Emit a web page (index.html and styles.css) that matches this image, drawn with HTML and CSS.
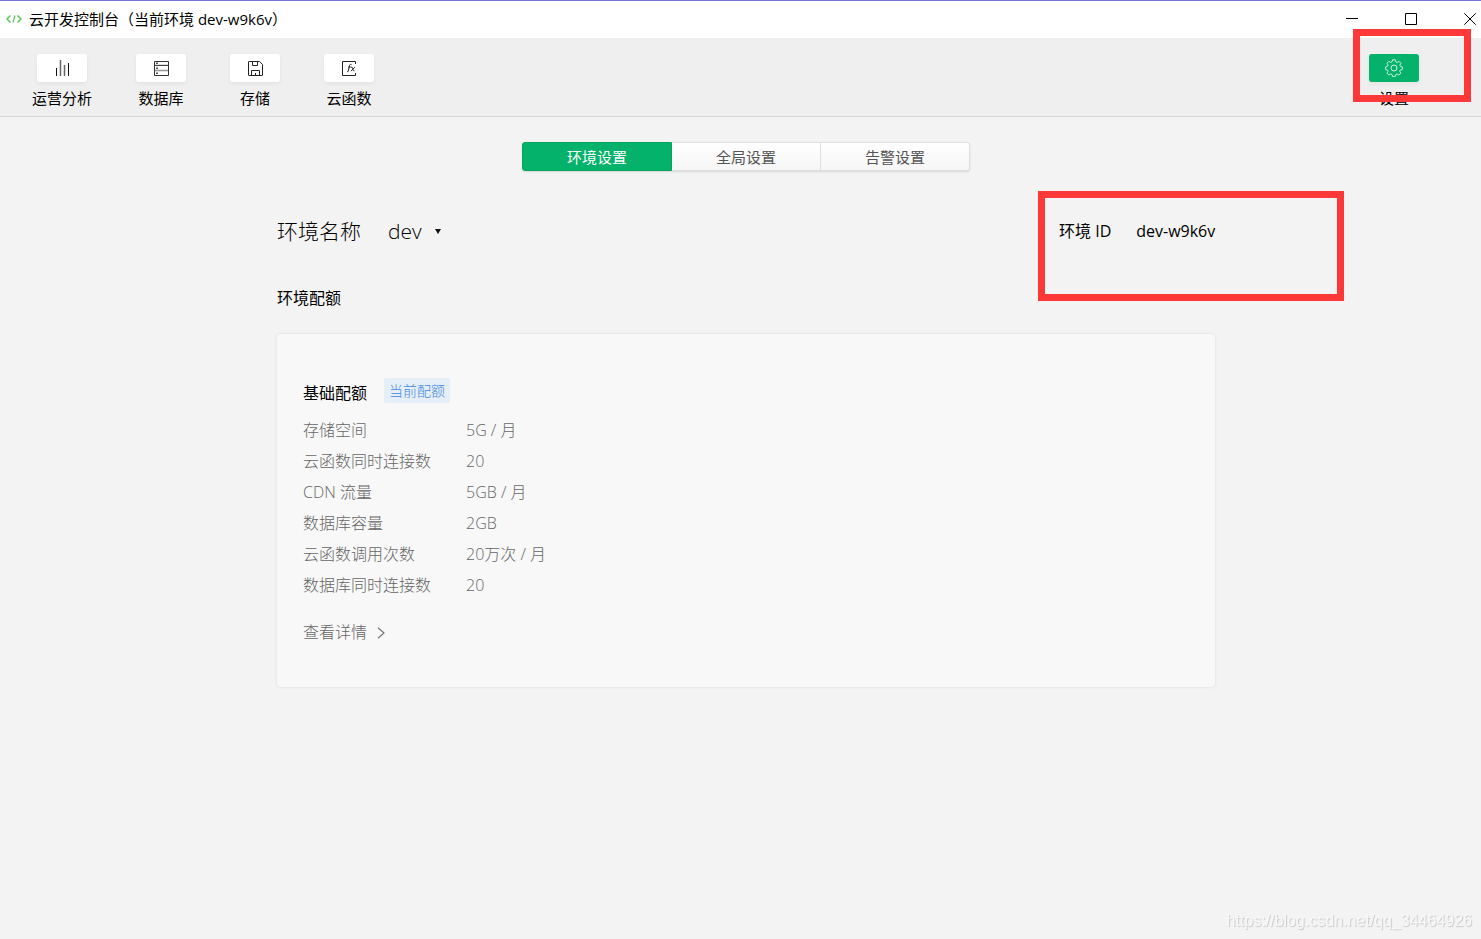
FILE: index.html
```html
<!DOCTYPE html>
<html lang="zh-CN">
<head>
<meta charset="utf-8">
<meta name="viewport" content="width=device-width, initial-scale=1">
<title>云开发控制台</title>
<link rel="stylesheet" href="styles.css">
</head>
<body>
<header class="titlebar">
  <svg class="logo" viewBox="0 0 16 12" fill="none" stroke="#5cc657" stroke-width="1.5"><path d="M4.500 2.500 1 6l3.500 3.500M11.500 2.500 15 6l-3.500 3.500"/><path d="M9 2.500 7 9.500" stroke-width="1.200"/></svg>
  <h1 class="window-title">云开发控制台（当前环境 dev-w9k6v）</h1>
  <div class="window-controls">
    <button class="window-btn" aria-label="最小化"><svg viewBox="0 0 12 12"><path d="M0 5.500h12"/></svg></button>
    <button class="window-btn" aria-label="最大化"><svg viewBox="0 0 12 12"><path d="M.5.5h11v11H.5z"/></svg></button>
    <button class="window-btn" aria-label="关闭"><svg viewBox="0 0 12 12"><path d="m.3.3 11.400 11.400M11.700.3.3 11.700"/></svg></button>
  </div>
</header>

<nav class="toolbar">
  <button class="tool">
    <span class="tool-icon"><svg viewBox="0 0 16 16" fill="none"><path d="M2.500 8v8M14.500 3v13" stroke="#111"/><path d="M6.500 0v16M10.500 5v11" stroke="#666" stroke-width="1.500"/></svg></span>
    <span class="tool-label">运营分析</span>
  </button>
  <button class="tool">
    <span class="tool-icon"><svg viewBox="0 0 16 16" fill="none"><path d="M1.500 1.500h14v14h-14zM1.500 5.500h14" stroke="#333"/><path d="M2 4.700h13" stroke="#bbb" stroke-width=".6"/><path d="M2 10.500h13" stroke="#999" stroke-width="1.600"/><path d="M3 3.300h2M3 8.200h2M3 13.200h2" stroke="#555" stroke-width="1.400"/></svg></span>
    <span class="tool-label">数据库</span>
  </button>
  <button class="tool">
    <span class="tool-icon"><svg viewBox="0 0 16 16" fill="none" stroke="#222"><path d="M1.500 2q0-.5.500-.5h10.500l3 3V15q0 .5-.500.500H2q-.5 0-.500-.500zM5.500 1.500v4h5v-4M4.500 15.500v-5h8v5M8.500 13v2.500"/></svg></span>
    <span class="tool-label">存储</span>
  </button>
  <button class="tool">
    <span class="tool-icon"><svg viewBox="0 0 16 16" fill="none" stroke="#222"><path d="M14.500 4V1.500h-13v14h13V13"/><path d="M10.500 4.500c-1-.500-1.800 0-2 1l-1.200 5.500q-.3 1-1.200.8M7.100 7h2.700M10 7.200c1.500-.3 1.600.5 1.900 2s.5 1.800 1.600 1.600M13.800 7.200l-3.900 4" /></svg></span>
    <span class="tool-label">云函数</span>
  </button>
  <button class="tool tool-settings">
    <span class="tool-icon tool-icon-active"><svg class="gear" viewBox="0 0 18 18" fill="none" stroke="#d2f5e5" stroke-linejoin="round"><path d="M7.500 1h3l.6 2.300 1.400.6 2-1.200 2 2-1.200 2 .6 1.400 2.100.5v2.800l-2.200.6-.6 1.400 1.200 2-2 2-2-1.200-1.400.6-.5 2.200h-3l-.6-2.200-1.400-.6-2 1.200-2-2 1.200-2-.6-1.400L0 11.400V8.600L2.100 8l.6-1.400-1.200-2 2-2 2 1.200 1.400-.6z" transform="translate(.6 -.1) scale(.93)"/><circle cx="9" cy="9" r="3"/></svg></span>
    <span class="tool-label">设置</span>
    <span class="marker marker-settings"></span>
  </button>
</nav>

<main class="page">
  <div class="tabs" role="tablist">
    <button class="tab tab-active" role="tab" aria-selected="true">环境设置</button>
    <button class="tab" role="tab" aria-selected="false">全局设置</button>
    <button class="tab" role="tab" aria-selected="false">告警设置</button>
  </div>

  <div class="content">
    <section class="env">
      <h2 class="env-name">环境名称</h2>
      <button class="env-picker" aria-label="环境 dev">dev<span class="caret"></span></button>
      <div class="env-id">
        <span>环境 ID</span>
        <span>dev-w9k6v</span>
        <span class="marker marker-id"></span>
      </div>
    </section>

    <h3 class="section-title">环境配额</h3>
    <section class="card">
      <div class="card-head">
        <h4 class="card-title">基础配额</h4>
        <span class="tag">当前配额</span>
      </div>
      <dl class="quota">
        <dt>存储空间</dt><dd>5G / 月</dd>
        <dt>云函数同时连接数</dt><dd>20</dd>
        <dt>CDN 流量</dt><dd>5GB / 月</dd>
        <dt>数据库容量</dt><dd>2GB</dd>
        <dt>云函数调用次数</dt><dd>20万次 / 月</dd>
        <dt>数据库同时连接数</dt><dd>20</dd>
      </dl>
      <a class="details" href="#">查看详情<svg class="chevron" viewBox="0 0 8 12" fill="none" stroke="#777" stroke-width="1.200"><path d="m1 .7 6 5.300-6 5.300"/></svg></a>
    </section>
  </div>
</main>
<div class="watermark">https://blog.csdn.net/qq_34464926</div>
</body>
</html>
```

FILE: styles.css
```css
* {
  box-sizing: border-box;
}

body {
  margin: 0;
  min-height: 100vh;
  background: #f3f3f3;
  color: #000;
  font-family: "Open Sans", "Noto Sans CJK SC", sans-serif;
  font-size: 16px;
  font-weight: 300;
}

button {
  margin: 0;
  padding: 0;
  border: 0;
  background: none;
  color: inherit;
  font: inherit;
}

h1, h2, h3, h4, dl, dd {
  margin: 0;
  font-weight: inherit;
}

svg {
  display: block;
}

/* Title bar */
.titlebar {
  display: flex;
  align-items: center;
  height: 38px;
  padding: 0 5px 2px 6px;
  border-top: 1px solid #7974d6;
  background: #fff;
}

.logo {
  width: 16px;
  height: 12px;
  margin-right: 7px;
}

.window-title {
  font-size: 15px;
  font-weight: 400;
  line-height: 22px;
}

.window-controls {
  display: flex;
  gap: 47px;
  margin-left: auto;
}

.window-btn svg {
  width: 12px;
  height: 12px;
  fill: none;
  stroke: #000;
}

/* Toolbar */
.toolbar {
  display: flex;
  gap: 44px;
  height: 79px;
  padding: 16px 62px 0 32px;
  border-bottom: 1px solid #d6d6d6;
  background: #efefef;
}

.tool {
  position: relative;
  display: flex;
  flex-direction: column;
  align-items: center;
  min-width: 50px;
  gap: 5px;
  height: 56px;
}

.tool-settings {
  margin-left: auto;
}

.tool-icon {
  display: flex;
  align-items: center;
  justify-content: center;
  width: 50px;
  height: 28px;
  border-radius: 3px;
  background: #fff;
  box-shadow: 0 2px 4px rgba(0, 0, 0, 0.05);
}

.tool-icon svg {
  width: 16px;
  height: 16px;
}

.tool-icon .gear {
  width: 18px;
  height: 18px;
}

.tool-icon-active {
  background: #05b26b;
}

.tool-label {
  font-size: 15px;
  font-weight: 400;
  line-height: 22px;
  white-space: nowrap;
}

/* Red highlight frames */
.marker {
  position: absolute;
  border: 7px solid #fc3938;
  pointer-events: none;
}

.marker-settings {
  top: -25px;
  left: -16px;
  width: 118px;
  height: 73px;
}

.marker-id {
  top: -28px;
  left: -21px;
  width: 306px;
  height: 110px;
}

/* Tabs */
.page {
  padding: 25px 0 40px 11px;
}

.tabs {
  display: flex;
  width: 448px;
  margin: 0 auto;
  border-radius: 3px;
  box-shadow: 0 1px 2px rgba(0, 0, 0, 0.12);
}

.tab {
  flex: 1;
  height: 29px;
  padding-top: 1px;
  border: 1px solid #dfdfdf;
  border-left-width: 0;
  background: linear-gradient(#fff, #f6f6f6);
  color: #555;
  font-size: 15px;
  font-weight: 400;
  line-height: 26px;
}

.tab:last-child {
  border-radius: 0 3px 3px 0;
}

.tab-active {
  border: 1px solid #04a562;
  border-radius: 3px 0 0 3px;
  background: #05b26b;
  color: #fff;
}

/* Environment */
.content {
  max-width: 938px;
  margin: 0 auto;
}

.env {
  display: flex;
  align-items: center;
  height: 32px;
  margin-top: 44px;
}

.env-name,
.env-picker {
  font-size: 21px;
  line-height: 32px;
}

.env-picker {
  display: flex;
  align-items: center;
  gap: 13px;
  margin-left: 27px;
}

.caret {
  border: 3px solid transparent;
  border-top: 5px solid #111;
  border-bottom: 0;
}

.env-id {
  position: relative;
  display: flex;
  gap: 25px;
  width: 156px;
  margin-left: auto;
  font-weight: 400;
  line-height: 24px;
  white-space: nowrap;
}

.section-title {
  margin-top: 39px;
  font-size: 16px;
  font-weight: 400;
  line-height: 24px;
}

/* Quota card */
.card {
  margin-top: 24px;
  padding: 44px 26px 39px;
  border-radius: 4px;
  background: #f8f8f8;
  box-shadow: 0 0 3px rgba(0, 0, 0, 0.1);
}

.card-head {
  display: flex;
  align-items: flex-start;
  gap: 17px;
}

.card-title {
  font-size: 16px;
  font-weight: 400;
  line-height: 30px;
}

.tag {
  padding: 0 5px;
  border-radius: 2px;
  background: #e6eef8;
  color: #4088e0;
  font-size: 14px;
  line-height: 25px;
}

.quota {
  display: grid;
  grid-template-columns: 163px 1fr;
  margin-top: 7px;
  color: #666;
  line-height: 31px;
}

.details {
  display: inline-flex;
  align-items: center;
  gap: 10px;
  margin-top: 16px;
  color: #666;
  line-height: 31px;
  text-decoration: none;
}

.chevron {
  width: 8px;
  height: 12px;
}

.watermark {
  position: fixed;
  right: 9px;
  bottom: 8px;
  color: #f8f8f8;
  font-family: "Liberation Sans", Arial, sans-serif;
  font-size: 16px;
  font-weight: 400;
  line-height: 20px;
  text-shadow: 1px 1px 1px #c8c8c8;
}
```
